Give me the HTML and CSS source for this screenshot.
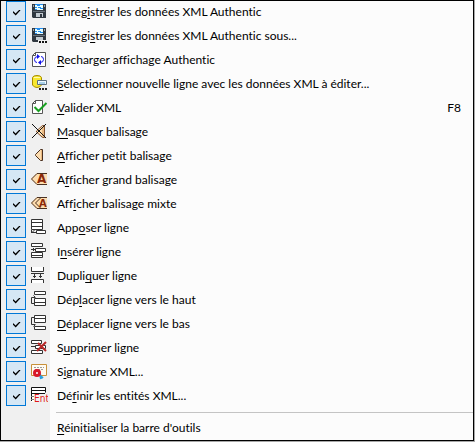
FILE: index.html
```html
<!DOCTYPE html>
<html lang="fr">
<head>
<meta charset="utf-8">
<title>Authentic</title>
<link rel="stylesheet" href="styles.css">
</head>
<body>
<div class="menu">
<label class="item"><input class="check" type="checkbox" checked>
<svg class="icon" viewBox="0 0 18 18" aria-hidden="true"><path fill="#303840" d="M2 2h14v14H3l-1-1z"/><path fill="#98a4ae" d="M3 3h1v2H3zM14 3h1v2h-1z"/><path fill="#e8ffff" d="M5 3h8v5H5z"/><path fill="#208cf0" d="M5 2h8v1H5zM7 3h3v1H7zM5 5h2v1H5zM8 5h3v1H8zM10 6h3v1h-3zM5 7h2v1H5z"/><path fill="#68717a" d="M3 9h12v1H3z"/><path fill="#c4ccd2" d="M6 11h7v4H6z"/><path fill="#303840" d="M10 12h2v3h-2z"/></svg>
<span class="text">Enreg<u>i</u>strer les données XML Authentic</span></label>
<label class="item"><input class="check" type="checkbox" checked>
<svg class="icon" viewBox="0 0 18 18" aria-hidden="true"><path fill="#303840" d="M2 2h14v14H3l-1-1z"/><path fill="#98a4ae" d="M3 3h1v2H3zM14 3h1v2h-1z"/><path fill="#e8ffff" d="M5 3h8v5H5z"/><path fill="#208cf0" d="M5 2h8v1H5zM7 3h3v1H7zM5 5h2v1H5zM8 5h3v1H8zM10 6h3v1h-3zM5 7h2v1H5z"/><path fill="#68717a" d="M3 9h12v1H3z"/><path fill="#c4ccd2" d="M6 11h7v3H6z"/><path fill="#f0f0f0" d="M8 14h10v4H8z"/><path fill="#111" d="M9 15h2v2H9zM12 15h2v2h-2zM15 15h2v2h-2z"/></svg>
<span class="text">Enregi<u>s</u>trer les données XML Authentic sous...</span></label>
<label class="item"><input class="check" type="checkbox" checked>
<svg class="icon" viewBox="0 0 18 18" aria-hidden="true"><path fill="#fff" stroke="#555" d="M5.500 2.500h10v14h-13v-11zM5.500 2.500v3h-3"/><path fill="none" stroke="#1010e8" d="M8 6.500Q4.500 6.500 4.500 9.500T7 12.500M10 12.500Q13.500 12.500 13.500 9.500T11 6.500"/><path fill="#1010e8" d="M7 4l3 2.500L7 9zM11 10v5l-3-2.500z"/></svg>
<span class="text"><u>R</u>echarger affichage Authentic</span></label>
<label class="item"><input class="check" type="checkbox" checked>
<svg class="icon" viewBox="0 0 18 18" aria-hidden="true"><path fill="#f8e830" stroke="#a88c00" d="M2.500 3.500Q3 1.500 7 1.500T11.500 3.500V11Q10 13.500 7 13.500T2.500 11z"/><path fill="#fffbb0" d="M4 3h6v1H4z"/><path fill="#eef8ff" stroke="#5c7080" d="M7.500 6.500h9v4h-9z"/><path fill="#a8d0e8" d="M9 8h6v2H9z"/><path fill="#222" d="M9 14h2v2H9zM12 14h2v2h-2zM15 14h2v2h-2z"/></svg>
<span class="text"><u>S</u>électionner nouvelle ligne avec les données XML à éditer...</span></label>
<label class="item"><input class="check" type="checkbox" checked>
<svg class="icon" viewBox="0 0 18 18" aria-hidden="true"><path fill="#fff" stroke="#555" d="M5.500 2.500h7v13h-10v-10zM5.500 2.500v3h-3"/><path fill="none" stroke="#18a020" stroke-width="2" d="M4.500 9l4 4L16.500 5"/></svg>
<span class="text"><u>V</u>alider XML</span><kbd class="key">F8</kbd></label>
<label class="item"><input class="check" type="checkbox" checked>
<svg class="icon" viewBox="0 0 18 18" aria-hidden="true"><path fill="#fddcae" stroke="#805030" d="M14.500 3.500v12h-2L6.500 10V9l6-5.500z"/><path fill="#e8b880" d="M12 5h2v10h-2z"/><path fill="none" stroke="#111" d="M2 2l14 14M16 2L2 16"/></svg>
<span class="text"><u>M</u>asquer balisage</span></label>
<label class="item"><input class="check" type="checkbox" checked>
<svg class="icon" viewBox="0 0 18 18" aria-hidden="true"><path fill="#fddcae" stroke="#4a3020" d="M12.500 3.500v11h-2L5.500 9.500V8.500l5-5z"/><path fill="#e8b880" d="M11 4h1v10h-1z"/></svg>
<span class="text"><u>A</u>fficher petit balisage</span></label>
<label class="item"><input class="check" type="checkbox" checked>
<svg class="icon" viewBox="0 0 18 18" aria-hidden="true"><path fill="#fddcae" d="M17 3H7L1 9l6 6h10z"/><path fill="none" stroke="#4a3020" d="M17 3.500H7L1.500 9l5.500 5.500h10"/><text class="tag-letter" x="7" y="13">A</text></svg>
<span class="text">A<u>f</u>ficher grand balisage</span></label>
<label class="item"><input class="check" type="checkbox" checked>
<svg class="icon" viewBox="0 0 18 18" aria-hidden="true"><path fill="#fddcae" d="M17 3H7L1 9l6 6h10z"/><path fill="none" stroke="#4a3020" d="M11 3.500H7L1.500 9l5.500 5.500h4M17 3.500h-6L5.500 9l5.500 5.500h6"/><text class="tag-letter tag-letter-small" x="9" y="13">A</text></svg>
<span class="text">Aff<u>i</u>cher balisage mixte</span></label>
<label class="item"><input class="check" type="checkbox" checked>
<svg class="icon" viewBox="0 0 18 18" aria-hidden="true"><g fill="none" stroke="#333"><path fill="#fff" d="M1.500 1.500h11v10h-11zM1.500 4.500h11M1.500 8.500h11M6.500 12.500h9v3h-9z"/><path d="M4.500 12L2 14.500h4M1.500 12v3"/></g></svg>
<span class="text">App<u>o</u>ser ligne</span></label>
<label class="item"><input class="check" type="checkbox" checked>
<svg class="icon" viewBox="0 0 18 18" aria-hidden="true"><g fill="#fff" stroke="#333"><path d="M1.500 1.500h11v3h-11zM5.500 6.500h10v3h-10zM1.500 10.500h11v5h-11zM1.500 13.500h11"/><path fill="none" d="M1 7.500h4M3.500 6v3"/></g></svg>
<span class="text">I<u>n</u>sérer ligne</span></label>
<label class="item"><input class="check" type="checkbox" checked>
<svg class="icon" viewBox="0 0 18 18" aria-hidden="true"><g fill="none" stroke="#333"><path fill="#fff" d="M1.500 1v4.500h12V1M1.500 17v-3.500h12V17"/><path d="M1 7.500h13M4.500 7v5M10.500 7v5M3 10.500h3M9 10.500h3"/></g></svg>
<span class="text">Dupli<u>q</u>uer ligne</span></label>
<label class="item"><input class="check" type="checkbox" checked>
<svg class="icon" viewBox="0 0 18 18" aria-hidden="true"><g fill="#fff" stroke="#333"><path d="M4.500 1.500h11v3h-11zM4.500 8.500h11v7h-11zM4.500 12.500h11"/><path fill="none" d="M4 13.500H1.500v-6H5M3.500 5.500l2 2"/></g></svg>
<span class="text">Dép<u>l</u>acer ligne vers le haut</span></label>
<label class="item"><input class="check" type="checkbox" checked>
<svg class="icon" viewBox="0 0 18 18" aria-hidden="true"><g fill="#fff" stroke="#333"><path d="M4.500 1.500h11v7h-11zM4.500 4.500h11M4.500 12.500h11v3h-11z"/><path fill="none" d="M4 3.500H1.500v7H5M3.500 12.500l2-2"/></g></svg>
<span class="text"><u>D</u>éplacer ligne vers le bas</span></label>
<label class="item"><input class="check" type="checkbox" checked>
<svg class="icon" viewBox="0 0 18 18" aria-hidden="true"><path fill="#fff" stroke="#333" d="M1.500 2.500h10v3h-10zM5.500 7.500h10v3h-10zM1.500 12.500h11v3h-11z"/><path fill="none" stroke="#333" d="M1 8.500h4"/><path fill="none" stroke="#b82828" stroke-width="2" d="M8 5l8 8M16 4l-9 9"/></svg>
<span class="text">S<u>u</u>pprimer ligne</span></label>
<label class="item"><input class="check" type="checkbox" checked>
<svg class="icon" viewBox="0 0 18 18" aria-hidden="true"><path fill="#fffaf0" stroke="#c89038" d="M1.500 2.500h15v11h-15z"/><path fill="none" stroke="#999" stroke-dasharray="2 1" d="M4 5.500h10M5 7.500h9"/><path fill="none" stroke="#28a0e0" stroke-width="2" d="M8 12l5 4M10 12l1 5"/><circle cx="7" cy="11" r="2.500" fill="#fff" stroke="#d81828" stroke-width="3"/></svg>
<span class="text">S<u>i</u>gnature XML...</span></label>
<label class="item"><input class="check" type="checkbox" checked>
<svg class="icon" viewBox="0 0 18 18" aria-hidden="true"><path fill="#fff" d="M1 1h14v6H5v9H1z"/><path fill="none" stroke="#111" d="M1.500 15V1.500h14v5M1 4.500h14M1 7.500h14"/><path fill="none" stroke="#777" d="M1 10.500h3M1 13.500h3"/><text class="entity" x="4" y="16">Ent</text></svg>
<span class="text">Dé<u>f</u>inir les entités XML...</span></label>
<hr class="separator">
<button class="reset" type="button"><u>R</u>éinitialiser la barre d'outils</button>
</div>
</body>
</html>
```
FILE: styles.css
```css
body {
  margin: 0;
  background: #a8a8a8;
  color: #000;
  font: 12px/22px Lato, "Open Sans", sans-serif;
  font-variant-ligatures: none;
}

.menu {
  display: flex;
  flex-direction: column;
  margin: 0 1px 1px 0;
  border: 1px solid #000;
  background: linear-gradient(to right, #f0f0f0 49px, #fcfcfc 49px);
}

.item {
  display: flex;
  align-items: flex-start;
  height: 24px;
  padding: 0 12px 0 5px;
}

.check {
  display: grid;
  place-items: center;
  box-sizing: border-box;
  flex: none;
  width: 20px;
  height: 21px;
  margin: 0;
  appearance: none;
  border: 1px solid #0078d7;
  background: #d5e7f5;
}

.check:checked::before {
  content: "";
  width: 8px;
  height: 6px;
  margin: 2px 0 0 1px;
  background: #000;
  clip-path: polygon(0 45%, 12% 30%, 38% 66%, 88% 0, 100% 12%, 40% 100%);
}

.icon {
  flex: none;
  width: 18px;
  height: 18px;
  margin: 1px 9px 0 4px;
}

.tag-letter {
  fill: #8a2808;
  font: bold 12px/1 "DejaVu Sans", sans-serif;
}

.tag-letter-small {
  font-size: 10px;
}

.entity {
  fill: #e01818;
  font: 10px/1 "Liberation Sans Narrow", "DejaVu Sans Condensed", sans-serif;
}

.text {
  white-space: nowrap;
}

u {
  text-underline-offset: 2px;
  text-decoration-thickness: 1px;
}

.key {
  margin-left: auto;
  font: inherit;
}

.separator {
  align-self: stretch;
  height: 1px;
  margin: 3px 0 0 55px;
  border: 0;
  background: #c4c4c4;
}

.reset {
  margin: 0;
  padding: 4px 12px 1px 56px;
  border: 0;
  background: none;
  color: inherit;
  font: inherit;
  font-variant-ligatures: none;
  text-align: left;
}
```
